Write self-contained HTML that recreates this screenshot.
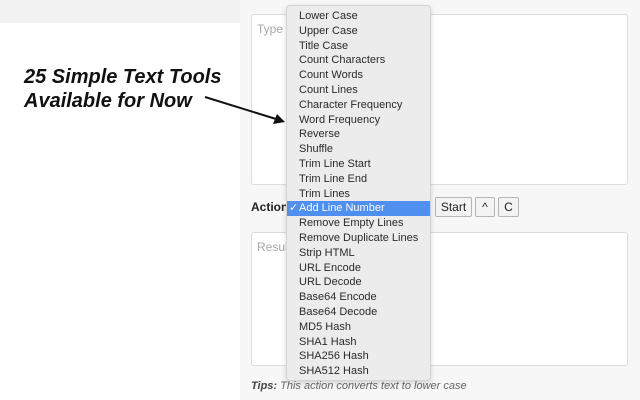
<!DOCTYPE html>
<html><head><style>
body{margin:0;width:640px;height:400px;position:relative;overflow:hidden;background:#f7f7f7;font-family:"Liberation Sans",Arial,sans-serif}
.abs{position:absolute}
.ta{background:#fff;border:1px solid #dcdcdc;border-radius:3px;box-sizing:border-box}
.ph{color:#a8a8a8;font-size:12px}
.btn{border:1px solid #b5b5b5;background:#f3f3f3;font-size:12px;color:#222;text-align:center;line-height:18px;box-sizing:border-box;height:20px;top:197px;border-radius:2px}
.menu{left:286px;top:5px;width:145px;height:376px;background:#ececec;border:1px solid #d4d4d4;border-radius:4px;box-sizing:border-box;box-shadow:0 2px 6px rgba(0,0,0,.15)}
.it{position:absolute;left:12px;font-size:11px;color:#2a2a2a;line-height:14.8px;white-space:nowrap}
</style></head><body>
<div class="abs" style="left:0;top:0;width:240px;height:23px;background:#f2f2f2"></div>
<div class="abs" style="left:0;top:23px;width:240px;height:377px;background:#fff"></div>
<div class="abs" style="left:24px;top:65px;font-size:20px;font-weight:bold;font-style:italic;line-height:24px;color:#111">25 Simple Text Tools<br>Available for Now</div>
<svg class="abs" style="left:200px;top:92px;z-index:5" width="90" height="40"><line x1="5" y1="5" x2="76" y2="27" stroke="#111" stroke-width="2"/><polygon points="85,30 73,32 77,22" fill="#111"/></svg>
<div class="abs ta" style="left:251px;top:14px;width:377px;height:171px"><div class="ph" style="position:absolute;left:5px;top:7px">Type o</div></div>
<div class="abs" style="left:251px;top:200px;font-size:12px;font-weight:bold;color:#222">Action</div>
<div class="abs btn" style="left:435px;width:37px">Start</div>
<div class="abs btn" style="left:475px;width:20px">^</div>
<div class="abs btn" style="left:498px;width:21px">C</div>
<div class="abs ta" style="left:251px;top:232px;width:377px;height:134px"><div class="ph" style="position:absolute;left:5px;top:7px">Resul</div></div>
<div class="abs" style="left:251px;top:380px;font-size:11px;font-style:italic;color:#666"><b style="color:#444">Tips:</b> This action converts text to lower case</div>
<div class="abs menu">
<div class="abs" style="left:0;top:195px;width:143px;height:15px;background:#4f8ff0"></div>
<div class="it" style="top:3px">Lower Case<br>Upper Case<br>Title Case<br>Count Characters<br>Count Words<br>Count Lines<br>Character Frequency<br>Word Frequency<br>Reverse<br>Shuffle<br>Trim Line Start<br>Trim Line End<br>Trim Lines<br><span style="color:#fff;position:relative"><span style="position:absolute;left:-10px">✓</span>Add Line Number</span><br>Remove Empty Lines<br>Remove Duplicate Lines<br>Strip HTML<br>URL Encode<br>URL Decode<br>Base64 Encode<br>Base64 Decode<br>MD5 Hash<br>SHA1 Hash<br>SHA256 Hash<br>SHA512 Hash</div>
</div>
</body></html>
